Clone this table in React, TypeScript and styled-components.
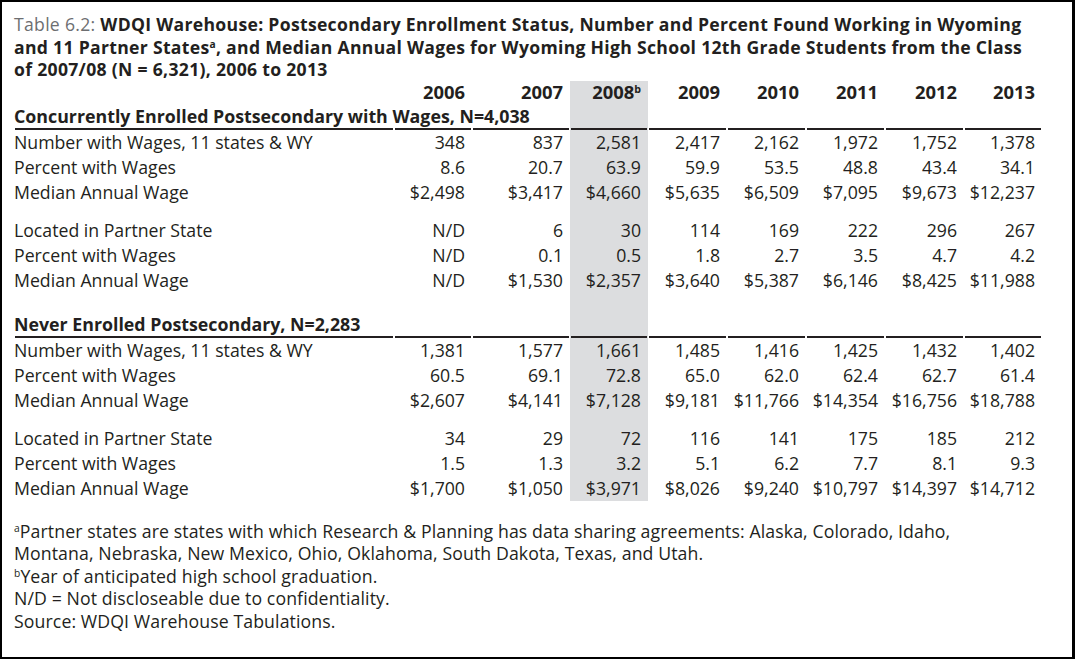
import React from 'react';
import styled, { createGlobalStyle } from 'styled-components';

const GlobalStyle = createGlobalStyle`
  html, body { margin: 0; padding: 0; background: #ffffff; }
  body {
    font-family: "Open Sans", "Noto Sans", sans-serif;
    color: #231f20;
  }
`;

const INK = '#231f20';
const SHADE = '#dcdddf';

const Frame = styled.div`
  box-sizing: border-box;
  width: 1075px;
  height: 659px;
  border-style: solid;
  border-color: #000;
  border-width: 2px 3px 2px 2px;
  box-shadow: 0 2px 0 #8c8c8c;
  padding: 11px 0 0 12px;
  overflow: hidden;
`;

const Title = styled.h1`
  margin: 0;
  font-size: 17.6px;
  line-height: 22.5px;
  font-weight: 700;
  letter-spacing: 0.3px;
  white-space: nowrap;
  color: ${INK};
`;

const TitleLead = styled.span`
  font-weight: 400;
  color: #6d6e71;
`;

const Sup = styled.sup`
  font-size: 0.58em;
  line-height: 0;
  vertical-align: 0.55em;
  font-weight: inherit;
`;

const Table = styled.table`
  table-layout: fixed;
  border-collapse: separate;
  border-spacing: 0;
  width: 1028px;
  font-size: 17.7px;
`;

const HeadCell = styled.th<{ $shaded?: boolean }>`
  height: 23px;
  padding: 0 7px 0 0;
  text-align: right;
  font-weight: 700;
  font-size: 18.4px;
  line-height: 22px;
  white-space: nowrap;
  background: ${(p) => (p.$shaded ? SHADE : 'transparent')};
`;

const rule = `linear-gradient(${INK}, ${INK}) 1px 100% / calc(100% - 2px) 2px no-repeat`;

const SectionCell = styled.td<{ $shaded?: boolean }>`
  height: 26px;
  padding: 0 0 2px 0;
  box-sizing: border-box;
  font-weight: 700;
  font-size: 17.8px;
  white-space: nowrap;
  overflow: visible;
  vertical-align: middle;
  background: ${(p) => (p.$shaded ? `${rule}, ${SHADE}` : rule)};
`;

const LabelCell = styled.td`
  height: 25px;
  padding: 0;
  white-space: nowrap;
  text-align: left;
`;

const ValueCell = styled.td<{ $shaded?: boolean }>`
  height: 25px;
  padding: 0 7px 0 0;
  text-align: right;
  white-space: nowrap;
  background: ${(p) => (p.$shaded ? SHADE : 'transparent')};
`;

const SpacerCell = styled.td<{ $shaded?: boolean; $h: number }>`
  height: ${(p) => p.$h}px;
  padding: 0;
  background: ${(p) => (p.$shaded ? SHADE : 'transparent')};
`;

const Notes = styled.div`
  margin-top: 19px;
  font-size: 17.7px;
  line-height: 22.5px;
  letter-spacing: 0.1px;
  white-space: nowrap;
`;

const NoteLine = styled.p`
  margin: 0;
`;

const years = ['2006', '2007', '2008', '2009', '2010', '2011', '2012', '2013'];
const colWidths = [380, 78, 98, 78, 79, 79, 79, 79, 78];
const SHADED_COL = 2;

type Row = [string, ...string[]];

const sections: { title: string; groups: Row[][] }[] = [
  {
    title: 'Concurrently Enrolled Postsecondary with Wages, N=4,038',
    groups: [
      [
        ['Number with Wages, 11 states & WY', '348', '837', '2,581', '2,417', '2,162', '1,972', '1,752', '1,378'],
        ['Percent with Wages', '8.6', '20.7', '63.9', '59.9', '53.5', '48.8', '43.4', '34.1'],
        ['Median Annual Wage', '$2,498', '$3,417', '$4,660', '$5,635', '$6,509', '$7,095', '$9,673', '$12,237'],
      ],
      [
        ['Located in Partner State', 'N/D', '6', '30', '114', '169', '222', '296', '267'],
        ['Percent with Wages', 'N/D', '0.1', '0.5', '1.8', '2.7', '3.5', '4.7', '4.2'],
        ['Median Annual Wage', 'N/D', '$1,530', '$2,357', '$3,640', '$5,387', '$6,146', '$8,425', '$11,988'],
      ],
    ],
  },
  {
    title: 'Never Enrolled Postsecondary, N=2,283',
    groups: [
      [
        ['Number with Wages, 11 states & WY', '1,381', '1,577', '1,661', '1,485', '1,416', '1,425', '1,432', '1,402'],
        ['Percent with Wages', '60.5', '69.1', '72.8', '65.0', '62.0', '62.4', '62.7', '61.4'],
        ['Median Annual Wage', '$2,607', '$4,141', '$7,128', '$9,181', '$11,766', '$14,354', '$16,756', '$18,788'],
      ],
      [
        ['Located in Partner State', '34', '29', '72', '116', '141', '175', '185', '212'],
        ['Percent with Wages', '1.5', '1.3', '3.2', '5.1', '6.2', '7.7', '8.1', '9.3'],
        ['Median Annual Wage', '$1,700', '$1,050', '$3,971', '$8,026', '$9,240', '$10,797', '$14,397', '$14,712'],
      ],
    ],
  },
];

function Spacer({ h }: { h: number }) {
  return (
    <tr>
      <SpacerCell $h={h} />
      {years.map((y, i) => (
        <SpacerCell key={y} $h={h} $shaded={i === SHADED_COL} />
      ))}
    </tr>
  );
}

export default function App() {
  return (
    <>
      <GlobalStyle />
      <Frame>
        <Title>
          <TitleLead>Table 6.2: </TitleLead>
          WDQI Warehouse: Postsecondary Enrollment Status, Number and Percent Found Working in Wyoming
          <br />
          and 11 Partner States<Sup>a</Sup>, and Median Annual Wages for Wyoming High School 12th Grade Students from the Class
          <br />
          of 2007/08 (N = 6,321), 2006 to 2013
        </Title>
        <Table>
          <colgroup>
            {colWidths.map((w, i) => (
              <col key={i} style={{ width: w }} />
            ))}
          </colgroup>
          <thead>
            <tr>
              <HeadCell />
              {years.map((y, i) => (
                <HeadCell key={y} $shaded={i === SHADED_COL}>
                  {y}
                  {i === SHADED_COL && <Sup>b</Sup>}
                </HeadCell>
              ))}
            </tr>
          </thead>
          <tbody>
            {sections.map((s, si) => (
              <React.Fragment key={s.title}>
                {si > 0 && <Spacer h={19} />}
                <tr>
                  <SectionCell>{s.title}</SectionCell>
                  {years.map((y, i) => (
                    <SectionCell key={y} $shaded={i === SHADED_COL} />
                  ))}
                </tr>
                {s.groups.map((g, gi) => (
                  <React.Fragment key={gi}>
                    {gi > 0 && <Spacer h={13} />}
                    {g.map((r, ri) => (
                      <tr key={ri}>
                        <LabelCell>{r[0]}</LabelCell>
                        {r.slice(1).map((v, i) => (
                          <ValueCell key={i} $shaded={i === SHADED_COL}>
                            {v}
                          </ValueCell>
                        ))}
                      </tr>
                    ))}
                  </React.Fragment>
                ))}
              </React.Fragment>
            ))}
          </tbody>
        </Table>
        <Notes>
          <NoteLine>
            <Sup>a</Sup>Partner states are states with which Research &amp; Planning has data sharing agreements: Alaska, Colorado, Idaho,
            <br />
            Montana, Nebraska, New Mexico, Ohio, Oklahoma, South Dakota, Texas, and Utah.
          </NoteLine>
          <NoteLine>
            <Sup>b</Sup>Year of anticipated high school graduation.
          </NoteLine>
          <NoteLine>N/D = Not discloseable due to confidentiality.</NoteLine>
          <NoteLine>Source: WDQI Warehouse Tabulations.</NoteLine>
        </Notes>
      </Frame>
    </>
  );
}
